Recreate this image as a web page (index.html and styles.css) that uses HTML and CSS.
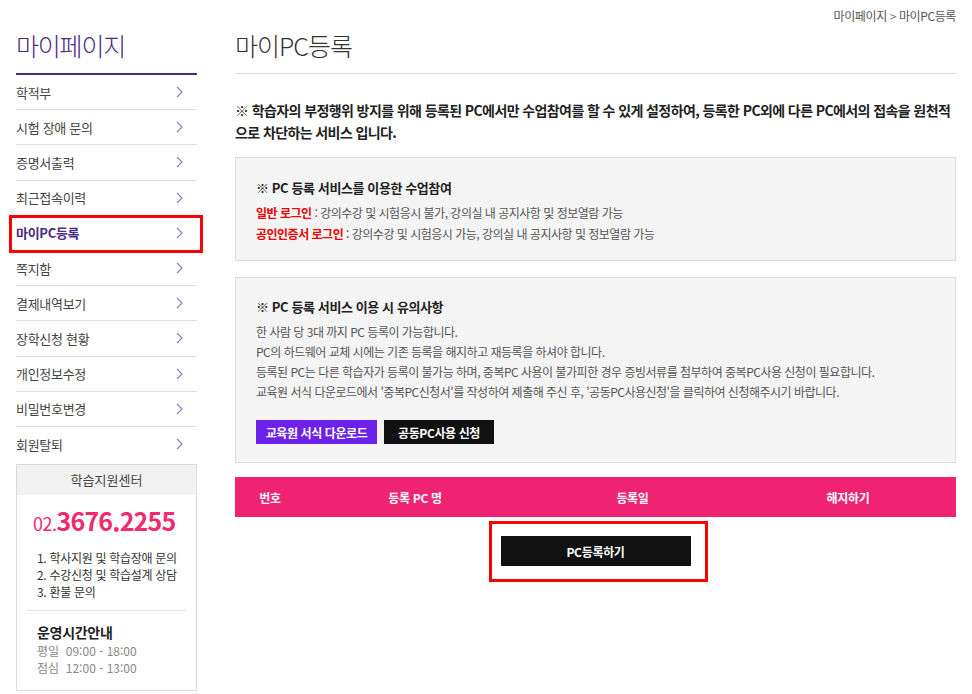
FILE: index.html
```html
<!DOCTYPE html>
<html lang="ko">
<head>
<meta charset="utf-8">
<title>마이PC등록</title>
<link rel="stylesheet" href="styles.css">
</head>
<body>
<div class="page">
  <aside class="sidebar">
    <h2 class="side-title">마이페이지</h2>
    <ul class="menu">
      <li class="menu-item"><span>학적부</span><svg class="chev" width="7" height="12" viewBox="0 0 7 12"><polyline points="1,1 6,6 1,11" /></svg></li>
      <li class="menu-item"><span>시험 장애 문의</span><svg class="chev" width="7" height="12" viewBox="0 0 7 12"><polyline points="1,1 6,6 1,11" /></svg></li>
      <li class="menu-item"><span>증명서출력</span><svg class="chev" width="7" height="12" viewBox="0 0 7 12"><polyline points="1,1 6,6 1,11" /></svg></li>
      <li class="menu-item"><span>최근접속이력</span><svg class="chev" width="7" height="12" viewBox="0 0 7 12"><polyline points="1,1 6,6 1,11" /></svg></li>
      <li class="menu-item active"><span>마이PC등록</span><svg class="chev" width="7" height="12" viewBox="0 0 7 12"><polyline points="1,1 6,6 1,11" /></svg></li>
      <li class="menu-item"><span>쪽지함</span><svg class="chev" width="7" height="12" viewBox="0 0 7 12"><polyline points="1,1 6,6 1,11" /></svg></li>
      <li class="menu-item"><span>결제내역보기</span><svg class="chev" width="7" height="12" viewBox="0 0 7 12"><polyline points="1,1 6,6 1,11" /></svg></li>
      <li class="menu-item"><span>장학신청 현황</span><svg class="chev" width="7" height="12" viewBox="0 0 7 12"><polyline points="1,1 6,6 1,11" /></svg></li>
      <li class="menu-item"><span>개인정보수정</span><svg class="chev" width="7" height="12" viewBox="0 0 7 12"><polyline points="1,1 6,6 1,11" /></svg></li>
      <li class="menu-item"><span>비밀번호변경</span><svg class="chev" width="7" height="12" viewBox="0 0 7 12"><polyline points="1,1 6,6 1,11" /></svg></li>
      <li class="menu-item last"><span>회원탈퇴</span><svg class="chev" width="7" height="12" viewBox="0 0 7 12"><polyline points="1,1 6,6 1,11" /></svg></li>
    </ul>
    <div class="support">
      <div class="support-head">학습지원센터</div>
      <div class="support-body">
        <div class="phone"><span class="phone-pre">02.</span><span class="phone-num">3676.2255</span></div>
        <ul class="support-list">
          <li>1. 학사지원 및 학습장애 문의</li>
          <li>2. 수강신청 및 학습설계 상담</li>
          <li>3. 환불 문의</li>
        </ul>
        <div class="hours">
          <div class="hours-title">운영시간안내</div>
          <div class="hours-row">평일&nbsp; 09:00 - 18:00</div>
          <div class="hours-row">점심&nbsp; 12:00 - 13:00</div>
        </div>
      </div>
    </div>
  </aside>

  <main class="main">
    <div class="breadcrumb">마이페이지 <span class="sep">&gt;</span> 마이PC등록</div>
    <h1 class="page-title">마이PC등록</h1>
    <p class="notice">※ 학습자의 부정행위 방지를 위해 등록된 PC에서만 수업참여를 할 수 있게 설정하여, 등록한 PC외에 다른 PC에서의 접속을 원천적으로 차단하는 서비스 입니다.</p>

    <section class="info-box">
      <h3 class="info-title">※ PC 등록 서비스를 이용한 수업참여</h3>
      <p class="info-line"><b class="red">일반 로그인</b> : 강의수강 및 시험응시 불가, 강의실 내 공지사항 및 정보열람 가능</p>
      <p class="info-line"><b class="red">공인인증서 로그인</b> : 강의수강 및 시험응시 가능, 강의실 내 공지사항 및 정보열람 가능</p>
    </section>

    <section class="info-box second">
      <h3 class="info-title">※ PC 등록 서비스 이용 시 유의사항</h3>
      <p class="info-line">한 사람 당 3대 까지 PC 등록이 가능합니다.</p>
      <p class="info-line">PC의 하드웨어 교체 시에는 기존 등록을 해지하고 재등록을 하셔야 합니다.</p>
      <p class="info-line">등록된 PC는 다른 학습자가 등록이 불가능 하며, 중복PC 사용이 불가피한 경우 증빙서류를 첨부하여 중복PC사용 신청이 필요합니다.</p>
      <p class="info-line">교육원 서식 다운로드에서 '중복PC신청서'를 작성하여 제출해 주신 후, '공동PC사용신청'을 클릭하여 신청해주시기 바랍니다.</p>
      <div class="btn-row">
        <a class="btn btn-purple">교육원 서식 다운로드</a>
        <a class="btn btn-black">공동PC사용 신청</a>
      </div>
    </section>

    <div class="table-head">
      <div class="col col-no">번호</div>
      <div class="col col-name">등록 PC 명</div>
      <div class="col col-date">등록일</div>
      <div class="col col-cancel">해지하기</div>
    </div>

    <div class="register-wrap">
      <a class="btn-register">PC등록하기</a>
    </div>
  </main>
</div>
</body>
</html>
```

FILE: styles.css
```css
* { box-sizing: border-box; }
html, body { margin: 0; padding: 0; background: #fff; }
body {
  font-family: "Noto Sans CJK KR", "Noto Sans", "Liberation Sans", sans-serif;
  color: #333;
  width: 972px;
}
ul { list-style: none; margin: 0; padding: 0; }
p, h1, h2, h3 { margin: 0; }

.page {
  display: flex;
  gap: 38px;
  padding: 0 16px;
}

/* Sidebar */
.sidebar { width: 181px; flex: none; padding-top: 28px; }
.side-title {
  font-size: 25px;
  font-weight: 300;
  line-height: 34px;
  color: #4b2a82;
  letter-spacing: -1.2px;
  padding-bottom: 11px;
  border-bottom: 2px solid #4b2a82;
}
.menu-item {
  position: relative;
  height: 35.2px;
  display: flex;
  align-items: center;
  justify-content: space-between;
  padding-right: 14px;
  border-bottom: 1px solid #dedede;
  font-size: 13px;
  color: #444;
  letter-spacing: -0.3px;
}
.menu-item.last { border-bottom: none; }
.chev polyline { fill: none; stroke: #8f78c4; stroke-width: 1.1; }
.menu-item.active { color: #4b2a82; font-weight: 700; }
.menu-item.active::after {
  content: "";
  position: absolute;
  left: -7px;
  right: -6px;
  top: -1px;
  bottom: -3px;
  border: 3px solid #ff0000;
}

.support {
  margin-top: 2px;
  border: 1px solid #dcdcdc;
  height: 227px;
}
.support-head {
  background: #f2f2f2;
  height: 30px;
  line-height: 29px;
  text-align: center;
  font-size: 13px;
  color: #444;
}
.support-body { padding: 0 10px; }
.phone {
  padding: 9px 0 0 6px;
  height: 46px;
  line-height: 32px;
  color: #ef2a6e;
  white-space: nowrap;
}
.phone-pre { font-size: 18px; letter-spacing: -0.5px; }
.phone-num { font-size: 25px; font-weight: 700; letter-spacing: -0.8px; }
.support-list {
  padding: 8px 0 10px 10px;
  border-bottom: 1px solid #e3e3e3;
  font-size: 12px;
  line-height: 17px;
  color: #333;
  letter-spacing: -0.3px;
}
.hours { padding: 11px 0 0 10px; }
.hours-title { font-size: 14px; font-weight: 700; color: #222; line-height: 20px; letter-spacing: -0.3px; }
.hours-row { font-size: 12px; color: #888; line-height: 17px; }

/* Main */
.main { width: 721px; flex: none; }
.breadcrumb {
  text-align: right;
  font-size: 12px;
  color: #555;
  line-height: 16px;
  padding-top: 8px;
  letter-spacing: -0.4px;
}
.breadcrumb .sep { color: #777; }
.page-title {
  font-size: 25px;
  font-weight: 300;
  color: #333;
  line-height: 34px;
  margin-top: 4px;
  padding-bottom: 11px;
  border-bottom: 1px solid #dcdcdc;
  letter-spacing: -1px;
}
.notice {
  margin-top: 25px;
  font-size: 14px;
  font-weight: 700;
  color: #222;
  line-height: 22px;
  letter-spacing: -0.6px;
}

.info-box {
  margin-top: 14px;
  background: #f4f4f4;
  border: 1px solid #dcdcdc;
  padding: 20px 20px 16px;
}
.info-box.second { margin-top: 16px; padding: 19px 20px 18px; }
.info-title {
  font-size: 13px;
  font-weight: 700;
  color: #222;
  line-height: 20px;
  margin-bottom: 4px;
  letter-spacing: -0.4px;
}
.second .info-title { margin-bottom: 5px; }
.info-line {
  font-size: 12px;
  color: #555;
  line-height: 21px;
  letter-spacing: -0.5px;
}
.second .info-line { line-height: 20px; }
.red { color: #ee0000; font-weight: 700; }

.btn-row { display: flex; gap: 7px; margin-top: 18px; }
.btn {
  display: inline-flex;
  align-items: center;
  justify-content: center;
  height: 24px;
  font-size: 12px;
  font-weight: 700;
  color: #fff;
  letter-spacing: -0.4px;
}
.btn-purple { background: #6c22ea; width: 121px; }
.btn-black { background: #111; width: 110px; }

.table-head {
  margin-top: 14px;
  display: flex;
  height: 40px;
  align-items: center;
  background: #f02272;
  color: #fff;
  font-size: 12px;
  font-weight: 700;
  letter-spacing: -0.3px;
}
.col { text-align: center; }
.col-no { width: 70px; }
.col-name { width: 220px; }
.col-date { width: 215px; }
.col-cancel { width: 216px; }

.register-wrap {
  display: flex;
  justify-content: center;
  padding-top: 19px;
}
.btn-register {
  position: relative;
  display: flex;
  align-items: center;
  justify-content: center;
  width: 190px;
  height: 30px;
  background: #111;
  color: #fff;
  font-size: 12px;
  font-weight: 700;
  letter-spacing: -0.3px;
}
.btn-register::after {
  content: "";
  position: absolute;
  left: -12px;
  right: -17px;
  top: -15px;
  bottom: -16px;
  border: 3px solid #ff0000;
}
```
